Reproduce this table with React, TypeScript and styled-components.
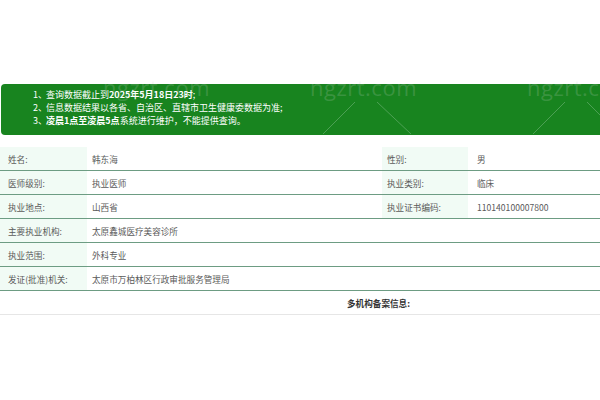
import React from "react";
import styled, { createGlobalStyle } from "styled-components";

const Global = createGlobalStyle`
  html, body { margin: 0; padding: 0; background: #fff; overflow: hidden; }
  body { font-family: "Noto Sans CJK SC", "Noto Sans", sans-serif; }
`;

const Page = styled.div`
  position: relative;
  width: 600px;
  height: 400px;
  overflow: hidden;
  padding-top: 84px;
  box-sizing: border-box;
`;

const Banner = styled.div`
  margin-left: 1px;
  margin-right: -6px;
  height: 51px;
  background: #18841f;
  border-radius: 4px;
  box-sizing: border-box;
  padding: 4px 0 0 32px;
  color: #fff;
  font-size: 9px;
  line-height: 13px;
`;

const Line = styled.div`
  display: flex;
  white-space: nowrap;
`;

const Num = styled.span`
  width: 13px;
`;

const B = styled.b`
  font-weight: 700;
`;

const Table = styled.div`
  margin-top: 12px;
  font-size: 8.6px;
  color: #5a5a5a;
`;

const Row = styled.div<{ $last?: boolean }>`
  display: grid;
  grid-template-columns: 87px 295px 86px 1fr;
  height: 24px;
  box-sizing: border-box;
  border-bottom: 1px solid ${(p) => (p.$last ? "#e6e6e6" : "#6d9c83")};
`;

const Label = styled.div<{ $pad?: number }>`
  background: #f1fbf5;
  display: flex;
  align-items: center;
  padding-left: ${(p) => p.$pad ?? 8}px;
  white-space: nowrap;
`;

const Value = styled.div<{ $pad?: number; $span?: boolean }>`
  display: flex;
  align-items: center;
  padding-left: ${(p) => p.$pad ?? 5}px;
  white-space: nowrap;
  ${(p) => (p.$span ? "grid-column: 2 / 5;" : "")}
`;

const Heading = styled.div`
  grid-column: 1 / 5;
  display: flex;
  align-items: center;
  padding-left: 347px;
  color: #333;
  font-weight: 700;
`;

const Watermark = styled.div<{ $x: number }>`
  position: absolute;
  top: 72px;
  left: ${(p) => p.$x}px;
  font-family: "Open Sans", "DejaVu Sans", sans-serif;
  font-size: 22px;
  color: rgba(200, 212, 204, 0.2);
  pointer-events: none;
  letter-spacing: 0.5px;
`;

const Overlay = styled.svg`
  position: absolute;
  left: 0;
  top: 0;
  pointer-events: none;
`;

const rows: Array<[string, string, string?, string?]> = [
  ["姓名:", "韩东海", "性别:", "男"],
  ["医师级别:", "执业医师", "执业类别:", "临床"],
  ["执业地点:", "山西省", "执业证书编码:", "110140100007800"],
  ["主要执业机构:", "太原鑫城医疗美容诊所"],
  ["执业范围:", "外科专业"],
  ["发证(批准)机关:", "太原市万柏林区行政审批服务管理局"],
];

export default function App() {
  return (
    <>
      <Global />
      <Page>
        <Banner>
          <Line>
            <Num>1、</Num>
            <span>
              查询数据截止到<B>2025年5月18日23时</B>;
            </span>
          </Line>
          <Line>
            <Num>2、</Num>
            <span>信息数据结果以各省、自治区、直辖市卫生健康委数据为准;</span>
          </Line>
          <Line>
            <Num>3、</Num>
            <span>
              <B>凌晨1点至凌晨5点</B>系统进行维护，不能提供查询。
            </span>
          </Line>
        </Banner>
        <Table>
          {rows.map(([l1, v1, l2, v2]) => (
            <Row key={l1}>
              <Label>{l1}</Label>
              {l2 ? (
                <>
                  <Value>{v1}</Value>
                  <Label $pad={5}>{l2}</Label>
                  <Value $pad={9}>{v2}</Value>
                </>
              ) : (
                <Value $span>{v1}</Value>
              )}
            </Row>
          ))}
          <Row $last>
            <Heading>多机构备案信息:</Heading>
          </Row>
        </Table>
        <Watermark $x={103} aria-hidden>ngzrt.com</Watermark>
        <Watermark $x={310} aria-hidden>ngzrt.com</Watermark>
        <Watermark $x={527} aria-hidden>ngzrt.com</Watermark>
        <Overlay width="600" height="400" viewBox="0 0 600 400">
          <g stroke="rgba(200,225,205,0.3)" strokeWidth="1">
            <line x1="355" y1="102" x2="323" y2="134" />
            <line x1="377" y1="102" x2="411" y2="134" />
            <line x1="565" y1="102" x2="533" y2="134" />
            <line x1="587" y1="102" x2="600" y2="115" />
          </g>
        </Overlay>
      </Page>
    </>
  );
}
